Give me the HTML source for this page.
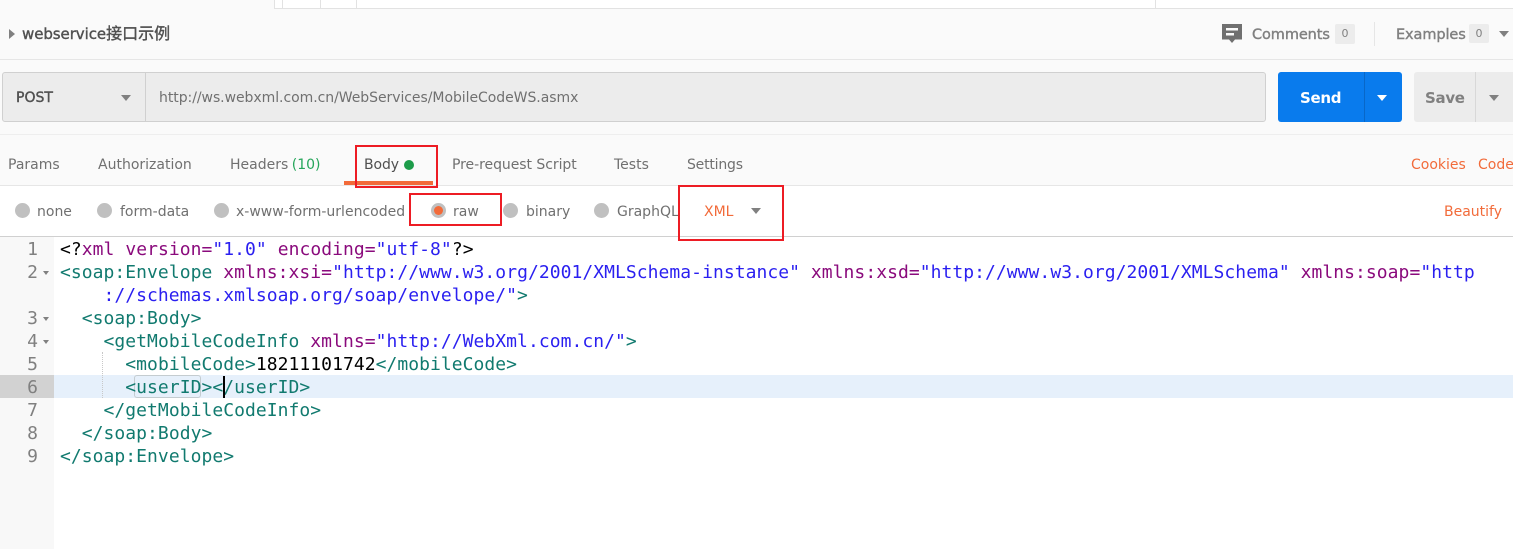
<!DOCTYPE html>
<html><head><meta charset="utf-8">
<style>
html,body{margin:0;padding:0;background:#fafafa}
#p{position:relative;width:1513px;height:549px;overflow:hidden;background:#fafafa;font-family:"DejaVu Sans","Noto Sans CJK SC",sans-serif;font-size:14px;color:#707070}
#p div,#p span.a{position:absolute}
.t{white-space:nowrap;line-height:20px}
.m{position:absolute;left:60px;white-space:pre;font:18px/23px "DejaVu Sans Mono",monospace;letter-spacing:.045px;color:#000}
.n{position:absolute;left:0;width:38px;text-align:right;font:18px/23px "DejaVu Sans Mono",monospace;color:#808080}
.g{color:#117a6f}.p{color:#8a0a7c}.b{color:#2a1ff0}
.tri{width:0;height:0;border-left:5px solid transparent;border-right:5px solid transparent;border-top:6px solid #808080}
.f{height:0;border-left:3px solid transparent;border-right:3px solid transparent;border-top:4px solid #808080;width:0}
.r{width:15px;height:15px;border-radius:50%;background:#c0c0c0}
.red{border:2px solid #ed1c24;box-sizing:border-box;z-index:5}
.o{color:#f26b3a}
.s{-webkit-text-stroke:.4px currentColor}
</style></head><body><div id="p">

<!-- top tab strip -->
<div style="left:275px;top:0;width:1238px;height:8px;background:#fff"></div>
<div style="left:274px;top:8px;width:1239px;height:1px;background:#e2e2e2"></div>
<div style="left:274px;top:0;width:1px;height:9px;background:#e2e2e2"></div>
<div style="left:282px;top:0;width:1px;height:9px;background:#e2e2e2"></div>
<div style="left:320px;top:0;width:1px;height:9px;background:#e2e2e2"></div>
<div style="left:356px;top:0;width:1px;height:9px;background:#e2e2e2"></div>
<div style="left:1155px;top:0;width:1px;height:9px;background:#e2e2e2"></div>

<!-- title row -->
<div style="left:9px;top:29px;width:0;height:0;border-top:5px solid transparent;border-bottom:5px solid transparent;border-left:6px solid #808080"></div>
<div class="t s" style="left:22px;top:24px;font-size:15px;color:#505050;letter-spacing:-.07px">webservice<span style="font-size:16px;letter-spacing:0">接口示例</span></div>
<div style="left:0;top:59px;width:1513px;height:1px;background:#e6e6e6"></div>

<svg style="position:absolute;left:1222px;top:24px" width="20" height="20" viewBox="0 0 20 20"><path d="M0 0H20V15.500H13L10 19L7 15.500H0Z" fill="#707070"/><rect x="4" y="4" width="12" height="2.500" fill="#fafafa"/><rect x="4" y="9" width="8" height="2.500" fill="#fafafa"/></svg>
<div class="t s" style="left:1252px;top:25px;color:#808080;font-size:14.500px;letter-spacing:-.1px">Comments</div>
<div style="left:1335px;top:24px;width:20px;height:20px;background:#ececec;border-radius:2px;text-align:center;font-size:11px;line-height:20px;color:#808080">0</div>
<div style="left:1374px;top:22px;width:1px;height:24px;background:#e6e6e6"></div>
<div class="t s" style="left:1396px;top:25px;color:#808080;font-size:14.500px;letter-spacing:-.1px">Examples</div>
<div style="left:1469px;top:24px;width:20px;height:19px;background:#ececec;border-radius:2px;text-align:center;font-size:11px;line-height:19px;color:#808080">0</div>
<div class="tri" style="left:1499px;top:31px;border-top-color:#808080"></div>

<!-- URL row -->
<div style="left:2px;top:72px;width:1264px;height:50px;box-sizing:border-box;background:#ececec;border:1px solid #d0d0d0;border-radius:3px"></div>
<div style="left:145px;top:73px;width:1px;height:48px;background:#d0d0d0"></div>
<div class="t s" style="left:16px;top:88px;font-size:14px;color:#505050">POST</div>
<div class="tri" style="left:121px;top:95px"></div>
<div class="t" style="left:159px;top:88px;color:#707070;font-size:14px;letter-spacing:-.05px">http://ws.webxml.com.cn/WebServices/MobileCodeWS.asmx</div>

<div style="left:1278px;top:72px;width:124px;height:50px;background:#097bed;border-radius:3px"></div>
<div style="left:1364px;top:72px;width:1px;height:50px;background:#0867c8"></div>
<div class="t" style="left:1300px;top:88px;color:#fff;font-weight:700;font-size:15px;letter-spacing:-.3px">Send</div>
<div class="tri" style="left:1377px;top:95px;border-top-color:#fff"></div>
<div style="left:1414px;top:72px;width:99px;height:50px;background:#ececec;border-radius:3px 0 0 3px"></div>
<div style="left:1475px;top:72px;width:1px;height:50px;background:#d8d8d8"></div>
<div class="t" style="left:1425px;top:88px;color:#808080;font-weight:700;font-size:15px;letter-spacing:-.3px">Save</div>
<div class="tri" style="left:1489px;top:95px"></div>

<!-- request tabs -->
<div style="left:0;top:134px;width:1513px;height:1px;background:#eeeeee"></div>
<div class="t" style="left:8px;top:155px">Params</div>
<div class="t" style="left:98px;top:155px">Authorization</div>
<div class="t" style="left:230px;top:155px">Headers <span style="color:#26a65b;margin-left:-1px">(10)</span></div>
<div class="t" style="left:364px;top:155px;color:#505050;letter-spacing:-.1px">Body</div>
<div style="left:404px;top:160px;width:10px;height:10px;border-radius:50%;background:#1d9c4a"></div>
<div class="t" style="left:452px;top:155px;letter-spacing:-.05px">Pre-request Script</div>
<div class="t" style="left:614px;top:155px">Tests</div>
<div class="t" style="left:687px;top:155px;letter-spacing:-.2px">Settings</div>
<div class="t o" style="left:1411px;top:155px">Cookies</div>
<div class="t o" style="left:1478px;top:155px">Code</div>

<div style="left:0;top:185px;width:1513px;height:52px;background:#fff"></div>
<div style="left:0;top:185px;width:1513px;height:1px;background:#e6e6e6"></div>
<div style="left:0;top:236px;width:1513px;height:1px;background:#d0d0d0"></div>
<div style="left:344px;top:181px;width:89px;height:4px;background:#f26b3a"></div>

<!-- body type row -->
<div class="r" style="left:15px;top:203px"></div><div class="t" style="left:37px;top:202px">none</div>
<div class="r" style="left:97px;top:203px"></div><div class="t" style="left:120px;top:202px">form-data</div>
<div class="r" style="left:214px;top:203px"></div><div class="t" style="left:236px;top:202px">x-www-form-urlencoded</div>
<div class="r" style="left:431px;top:203px"></div><div style="left:434px;top:206px;width:9px;height:9px;border-radius:50%;background:#f26b3a"></div>
<div class="t" style="left:453px;top:202px">raw</div>
<div class="r" style="left:503px;top:203px"></div><div class="t" style="left:526px;top:202px">binary</div>
<div class="r" style="left:594px;top:203px"></div><div class="t" style="left:617px;top:202px">GraphQL</div>
<div class="t o" style="left:704px;top:202px">XML</div>
<div class="tri" style="left:751px;top:208px"></div>
<div class="t o" style="left:1444px;top:202px">Beautify</div>

<!-- red boxes -->
<div class="red" style="left:355px;top:145px;width:83px;height:43px"></div>
<div class="red" style="left:409px;top:193px;width:93px;height:33px"></div>
<div class="red" style="left:678px;top:185px;width:106px;height:56px"></div>

<!-- editor -->
<div style="left:0;top:237px;width:1513px;height:312px;background:#fff"></div>
<div style="left:0;top:237px;width:54px;height:312px;background:#f8f8f8"></div>
<div style="left:54px;top:375px;width:1459px;height:23px;background:#e6f0fb"></div>
<div style="left:0;top:375px;width:54px;height:23px;background:#d2d2d2"></div>
<div style="left:102px;top:352px;width:0;height:46px;border-left:1px dotted #c8c8c8"></div>
<div style="left:134px;top:375px;width:67px;height:23px;box-sizing:border-box;border:1px solid #c4ccd0;border-radius:3px"></div>
<div style="left:223px;top:376px;width:2px;height:22px;background:#000;z-index:3"></div>

<span class="n" style="top:238px">1</span>
<span class="n" style="top:261px">2</span>
<span class="n" style="top:307px">3</span>
<span class="n" style="top:330px">4</span>
<span class="n" style="top:353px">5</span>
<span class="n" style="top:376px">6</span>
<span class="n" style="top:399px">7</span>
<span class="n" style="top:422px">8</span>
<span class="n" style="top:445px">9</span>
<div class="f" style="left:43px;top:271px"></div>
<div class="f" style="left:43px;top:317px"></div>
<div class="f" style="left:43px;top:340px"></div>

<span class="m" style="top:238px">&lt;?<span class="p">xml</span> <span class="p">version=</span><span class="b">"1.0"</span> <span class="p">encoding=</span><span class="b">"utf-8"</span>?&gt;</span>
<span class="m" style="top:261px"><span class="g">&lt;soap:Envelope</span> <span class="p">xmlns:xsi=</span><span class="b">"http://www.w3.org/2001/XMLSchema-instance"</span> <span class="p">xmlns:xsd=</span><span class="b">"http://www.w3.org/2001/XMLSchema"</span> <span class="p">xmlns:soap=</span><span class="b">"http</span></span>
<span class="m" style="top:284px;left:103.500px"><span class="b">://schemas.xmlsoap.org/soap/envelope/"</span><span class="g">&gt;</span></span>
<span class="m g" style="top:307px;color:#117a6f">  &lt;soap:Body&gt;</span>
<span class="m" style="top:330px">    <span class="g">&lt;getMobileCodeInfo</span> <span class="p">xmlns=</span><span class="b">"http://WebXml.com.cn/"</span><span class="g">&gt;</span></span>
<span class="m" style="top:353px">      <span class="g">&lt;mobileCode&gt;</span>18211101742<span class="g">&lt;/mobileCode&gt;</span></span>
<span class="m g" style="top:376px;color:#117a6f">      &lt;userID&gt;&lt;/userID&gt;</span>
<span class="m g" style="top:399px;color:#117a6f">    &lt;/getMobileCodeInfo&gt;</span>
<span class="m g" style="top:422px;color:#117a6f">  &lt;/soap:Body&gt;</span>
<span class="m g" style="top:445px;color:#117a6f">&lt;/soap:Envelope&gt;</span>
</div></body></html>
